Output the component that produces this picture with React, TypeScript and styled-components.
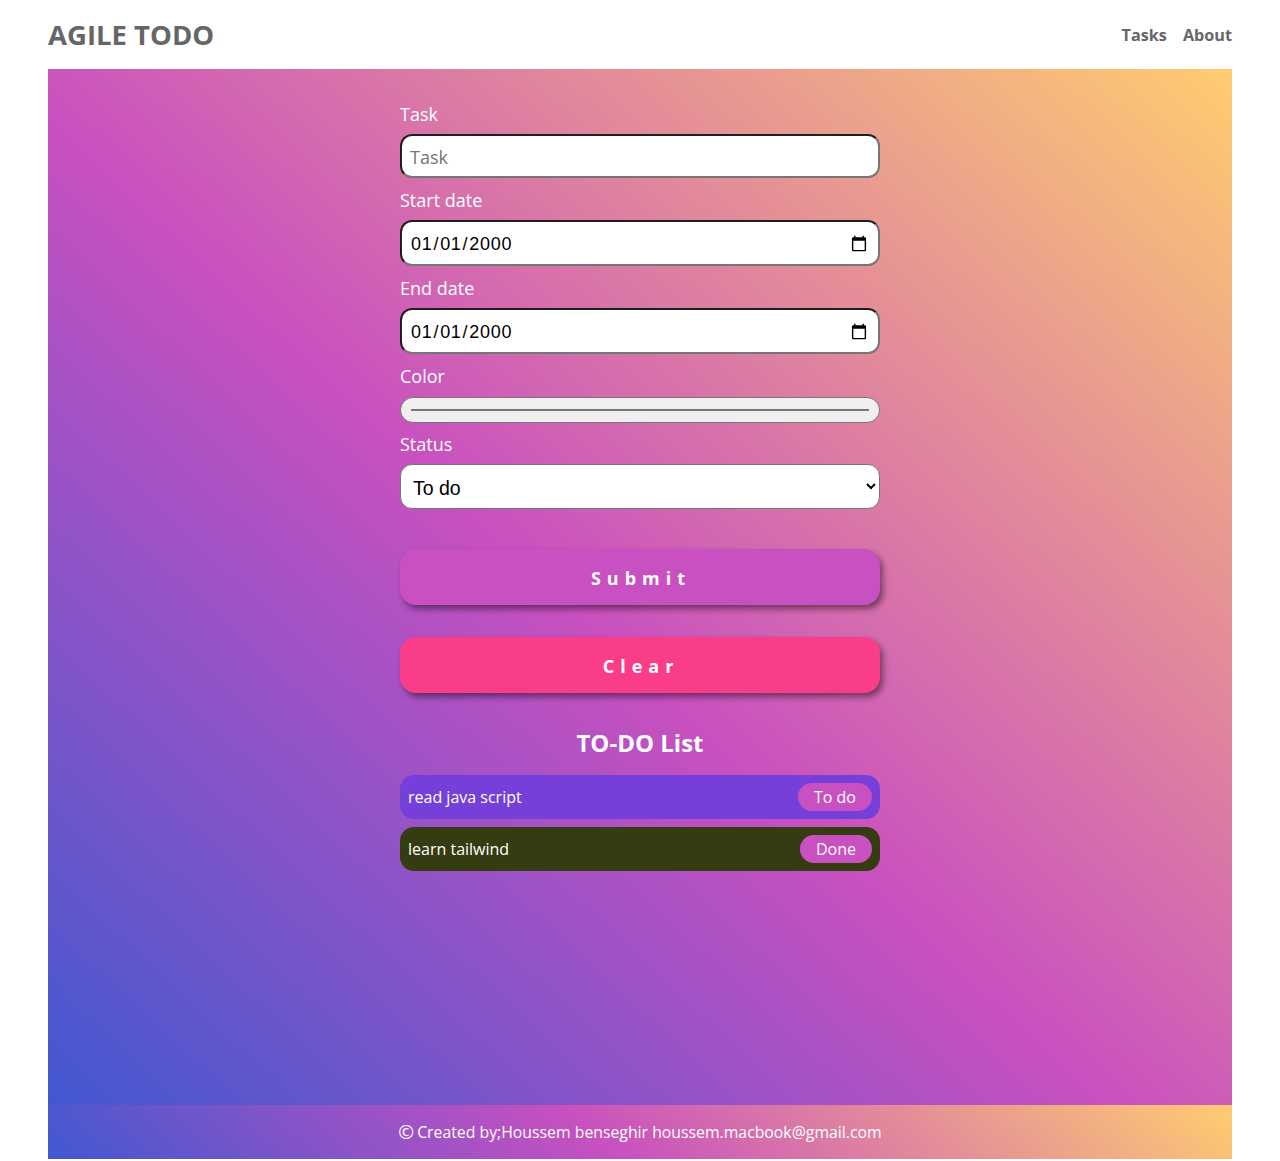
import React, { useState } from "react";
import styled, { createGlobalStyle } from "styled-components";

const GlobalStyle = createGlobalStyle`
  body {
    margin: 0;
    background: #ffffff;
    font-family: "Open Sans", "Liberation Sans", sans-serif;
  }
  * {
    box-sizing: border-box;
  }
`;

const gradient = "linear-gradient(43deg, #4158d0 0%, #c850c0 46%, #ffcc70 100%)";

const Page = styled.div`
  padding: 0 48px 2px;
`;

const Header = styled.header`
  height: 69px;
  display: flex;
  align-items: center;
  justify-content: space-between;
`;

const Logo = styled.h1`
  margin: 0;
  font-size: 27.5px;
  font-weight: 700;
  color: #666666;
`;

const NavLinks = styled.nav`
  display: flex;
  gap: 16px;
`;

const NavLink = styled.a`
  font-size: 16.2px;
  font-weight: 700;
  color: #666666;
  text-decoration: none;
`;

const Main = styled.main`
  min-height: 1036px;
  background: ${gradient};
  padding-top: 33px;
`;

const Form = styled.form`
  width: 480px;
  margin: 0 auto;
  display: flex;
  flex-direction: column;
`;

const Label = styled.label<{ $gap?: number }>`
  display: block;
  font-size: 18px;
  line-height: 24px;
  color: #ffffff;
  margin-bottom: ${(p) => p.$gap ?? 8}px;
`;

const Field = styled.div<{ $after?: number }>`
  margin-bottom: ${(p) => p.$after ?? 10}px;
`;

const TextInput = styled.input`
  width: 100%;
  height: 44px;
  border-radius: 12px;
  border-style: solid;
  border-width: 2px;
  border-color: #1f1f1f #767676 #767676 #1f1f1f;
  background: #ffffff;
  padding: 2px 8px 0;
  font-family: "Open Sans", sans-serif;
  font-size: 18px;
  color: #000000;
  outline: none;
  &::placeholder {
    color: #757575;
  }
`;

const DateInput = styled(TextInput)`
  height: 46px;
  font-family: "Liberation Sans", Arial, sans-serif;
  font-size: 18px;
  letter-spacing: 0.7px;
  padding: 2px 8px 0 8px;
`;

const ColorBox = styled.div`
  height: 26px;
  border: 1px solid #767676;
  border-radius: 13px;
  background: #efefef;
  padding: 0 10px;
  display: flex;
  align-items: center;
`;

const ColorLine = styled.div`
  flex: 1;
  height: 2px;
  background: #767676;
`;

const Select = styled.select`
  width: 100%;
  height: 45px;
  border: 1px solid #767676;
  border-radius: 12px;
  background: #ffffff;
  padding: 2px 6px 0 8px;
  font-family: "Liberation Sans", Arial, sans-serif;
  font-size: 19.5px;
  color: #000000;
  outline: none;
`;

const ActionButton = styled.button<{ $bg: string }>`
  height: 56px;
  width: 100%;
  border: none;
  border-radius: 16px;
  background: ${(p) => p.$bg};
  color: #ffffff;
  font-family: "Open Sans", sans-serif;
  font-size: 18px;
  font-weight: 700;
  letter-spacing: 6px;
  padding: 2px 0 0 2px;
  box-shadow: 3px 4px 6px rgba(0, 0, 0, 0.45);
  cursor: pointer;
`;

const ListTitle = styled.h2`
  margin: 34px 0 16px;
  text-align: center;
  font-size: 24px;
  line-height: 32px;
  font-weight: 700;
  color: #ffffff;
`;

const List = styled.ul`
  list-style: none;
  margin: 0 auto;
  padding: 0;
  width: 480px;
  display: flex;
  flex-direction: column;
  gap: 8px;
`;

const Item = styled.li<{ $bg: string }>`
  height: 44px;
  border-radius: 14px;
  background: ${(p) => p.$bg};
  display: flex;
  align-items: center;
  justify-content: space-between;
  padding: 0 8px;
  color: #ffffff;
  font-size: 16px;
`;

const Badge = styled.span`
  background: #c850c0;
  border-radius: 999px;
  height: 28px;
  padding: 0 16px;
  display: flex;
  align-items: center;
  font-size: 16px;
  color: #ffffff;
`;

const Footer = styled.footer`
  height: 54px;
  background: ${gradient};
  display: flex;
  align-items: center;
  justify-content: center;
  color: #ffffff;
  font-size: 15.8px;
`;

const Copy = styled.span`
  font-size: 19px;
  line-height: 1;
  margin-right: 3px;
`;

const todos = [
  { title: "read java script", status: "To do", color: "#763fda" },
  { title: "learn tailwind", status: "Done", color: "#363c12" },
];

export default function App() {
  const [task, setTask] = useState("");
  const [start, setStart] = useState("2000-01-01");
  const [end, setEnd] = useState("2000-01-01");
  const [status, setStatus] = useState("todo");

  return (
    <Page>
      <GlobalStyle />
      <Header>
        <Logo>AGILE TODO</Logo>
        <NavLinks>
          <NavLink href="#">Tasks</NavLink>
          <NavLink href="#">About</NavLink>
        </NavLinks>
      </Header>

      <Main>
        <Form onSubmit={(e) => e.preventDefault()}>
          <Field>
            <Label htmlFor="task">Task</Label>
            <TextInput
              id="task"
              placeholder="Task"
              value={task}
              onChange={(e) => setTask(e.target.value)}
            />
          </Field>
          <Field>
            <Label htmlFor="start">Start date</Label>
            <DateInput
              id="start"
              type="date"
              value={start}
              onChange={(e) => setStart(e.target.value)}
            />
          </Field>
          <Field>
            <Label htmlFor="end">End date</Label>
            <DateInput
              id="end"
              type="date"
              value={end}
              onChange={(e) => setEnd(e.target.value)}
            />
          </Field>
          <Field $after={9}>
            <Label $gap={9}>Color</Label>
            <ColorBox>
              <ColorLine />
            </ColorBox>
          </Field>
          <Field $after={40}>
            <Label htmlFor="status">Status</Label>
            <Select
              id="status"
              value={status}
              onChange={(e) => setStatus(e.target.value)}
            >
              <option value="todo">To do</option>
              <option value="doing">Doing</option>
              <option value="done">Done</option>
            </Select>
          </Field>
          <Field $after={32}>
            <ActionButton type="submit" $bg="#c850c0">
              Submit
            </ActionButton>
          </Field>
          <ActionButton type="button" $bg="#fa3d88">
            Clear
          </ActionButton>
        </Form>

        <ListTitle>TO-DO List</ListTitle>
        <List>
          {todos.map((t) => (
            <Item key={t.title} $bg={t.color}>
              <span>{t.title}</span>
              <Badge>{t.status}</Badge>
            </Item>
          ))}
        </List>
      </Main>

      <Footer>
        <Copy>©</Copy>Created by;Houssem benseghir houssem.macbook@gmail.com
      </Footer>
    </Page>
  );
}
